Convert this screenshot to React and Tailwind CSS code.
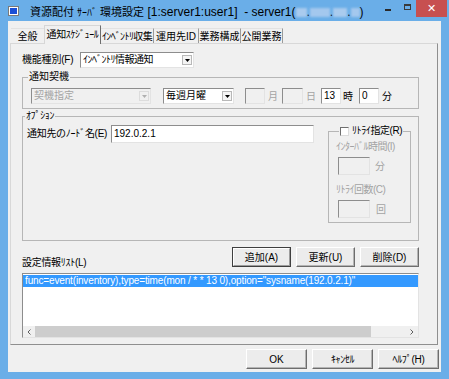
import React from 'react'

const sunken = 'border border-t-[#8d8d8d] border-l-[#8d8d8d] border-r-[#e3e3e3] border-b-[#e3e3e3]'

const Arrow = ({ color = '#000' }) => (
  <svg width="5" height="3" viewBox="0 0 5 3"><path d="M0 0h5L2.5 3z" fill={color} /></svg>
)

function Combo({ className, text, disabled }) {
  return (
    <div className={`flex items-center h-[16px] ${sunken} ${disabled ? 'bg-[#f0f0f0] text-[#a3a3a3]' : 'bg-white text-black'} ${className}`}>
      <span className="flex-1 pl-[2px] leading-[12px] whitespace-nowrap overflow-hidden">{text}</span>
      <span className={`w-[10px] h-[10px] mr-[1px] flex items-center justify-center border ${disabled ? 'border-[#dcdcdc]' : 'border-[#b8b8b8] bg-[#f4f4f4]'}`}>
        <Arrow color={disabled ? '#b0b0b0' : '#000'} />
      </span>
    </div>
  )
}

function Input({ className, value, disabled }) {
  return (
    <div className={`${sunken} ${disabled ? 'bg-[#f0f0f0]' : 'bg-white'} pl-[2px] leading-[13px] ${className}`}>
      {value}
    </div>
  )
}

function Btn({ className, children, def }) {
  if (def) {
    return (
      <div className={`border border-[#3f3f3f] ${className}`}>
        <div className="h-full flex items-center justify-center bg-[#ececec] border border-t-white border-l-white border-r-[#9c9c9c] border-b-[#9c9c9c]">
          {children}
        </div>
      </div>
    )
  }
  return (
    <div className={`flex items-center justify-center bg-[#ececec] border border-t-white border-l-white border-r-[#6d6d6d] border-b-[#6d6d6d] shadow-[inset_-1px_-1px_0_#b4b4b4] ${className}`}>
      {children}
    </div>
  )
}

const Chevron = ({ dir }) => (
  <svg width="4" height="6" viewBox="0 0 4 6">
    <path d={dir === 'l' ? 'M3.5 0.5L1 3l2.5 2.5' : 'M0.5 0.5L3 3 0.5 5.5'} fill="none" stroke="#606060" strokeWidth="1" />
  </svg>
)

export default function App() {
  return (
    <div className="w-[449px] h-[379px] bg-[#6aaee8] flex flex-col px-[8px] pb-[7px] font-['Liberation_Sans','Noto_Sans_CJK_JP',sans-serif] text-black">
      {/* title bar */}
      <div className="h-[21px] flex items-start shrink-0">
        <div className="mt-[6px] w-[11px] h-[10px] bg-white border border-[#7a7a7a] flex p-[1px]">
          <div className="flex-1 bg-[#1a4fd6]" />
        </div>
        <div className="ml-[11px] mt-[5px] text-[12px] leading-[15px] whitespace-nowrap flex items-center">
          <span className="text-[11px]">資源配付 <span className="text-[10px]">ｻｰﾊﾞ</span> 環境設定</span>
          <span>&nbsp;[1:server1:user1]&nbsp;&nbsp;- server1(</span>
          <span className="inline-block w-[11px] h-[9px] bg-[#a9cbee] blur-[1px]" />
          <span>.</span>
          <span className="inline-block w-[20px] h-[9px] bg-[#a4c8ee] blur-[1px]" />
          <span>.</span>
          <span className="inline-block w-[14px] h-[9px] bg-[#a9cbee] blur-[1px]" />
          <span>.</span>
          <span className="inline-block w-[9px] h-[9px] bg-[#a4c8ee] blur-[1px]" />
          <span>)</span>
        </div>
        <div className="ml-auto -mr-[6px] flex items-start">
          <div className="w-[6px] h-[2px] bg-[#2a2a2a] mt-[9px]" />
          <div className="ml-[13px] mt-[4px] w-[7px] h-[6px] border border-[#3a3a3a] border-t-2" />
          <div className="ml-[5px] w-[31px] h-[17px] bg-[#c75050] flex items-center justify-center text-white text-[11px] leading-[11px]">✕</div>
        </div>
      </div>

      {/* client */}
      <div className="flex-1 bg-[#f0f0f0] flex flex-col pl-[2px] pr-[2px] text-[10px]">
        {/* tabs */}
        <div className="h-[22px] flex items-end pl-[1px] shrink-0">
          <div className="w-[33px] h-[15px] flex items-center justify-center border-t border-t-[#e2e2e2]">全般</div>
          <div className="relative z-10 -mb-[1px] w-[57px] h-[19px] pb-[2px] flex items-center justify-center bg-[#f0f0f0] border-t border-l border-r border-t-[#d6d6d6] border-l-[#d6d6d6] border-r-[#6d6d6d] tracking-[-0.4px] whitespace-nowrap">通知ｽｹｼﾞｭｰﾙ</div>
          <div className="w-[53px] h-[15px] flex items-center justify-center border-t border-r border-t-[#e2e2e2] border-r-[#9a9a9a] tracking-[-0.6px] whitespace-nowrap">ｲﾝﾍﾞﾝﾄﾘ収集</div>
          <div className="w-[45px] h-[15px] flex items-center justify-center border-t border-r border-t-[#e2e2e2] border-r-[#9a9a9a] whitespace-nowrap">運用先ID</div>
          <div className="w-[42px] h-[15px] flex items-center justify-center border-t border-r border-t-[#e2e2e2] border-r-[#9a9a9a] whitespace-nowrap">業務構成</div>
          <div className="w-[42px] h-[15px] flex items-center justify-center border-t border-r border-t-[#e2e2e2] border-r-[#9a9a9a] whitespace-nowrap">公開業務</div>
        </div>

        {/* tab panel */}
        <div className="w-[428px] h-[302px] shrink-0 border border-t-[#d8d8d8] border-l-[#d8d8d8] border-r-[#8f8f8f] border-b-[#8f8f8f] pl-[11px] pt-[8px] flex flex-col">
          <div className="flex items-center h-[16px]">
            <span className="w-[58px] leading-[12px] tracking-[-0.2px]">機能種別(F)</span>
            <Combo className="w-[114px]" text={<span className="tracking-[-0.5px]">ｲﾝﾍﾞﾝﾄﾘ情報通知</span>} />
          </div>

          <fieldset className="mt-[3px] w-[397px] border border-[#b6b6b6] pb-[4px]">
            <legend className="ml-[5px] px-[1px] leading-[12px]">通知契機</legend>
            <div className="pt-[5px] pl-[8px] flex items-center">
              <Combo className="w-[120px]" text="契機指定" disabled />
              <Combo className="w-[71px] ml-[12px]" text="毎週月曜" />
              <Input className="ml-[11px] w-[20px] h-[16px]" disabled />
              <span className="w-[17px] pl-[3px] text-[#a3a3a3]">月</span>
              <Input className="w-[21px] h-[16px]" disabled />
              <span className="w-[18px] pl-[3px] text-[#a3a3a3]">日</span>
              <Input className="w-[20px] h-[16px]" value="13" />
              <span className="w-[18px] pl-[2px]">時</span>
              <Input className="w-[20px] h-[16px]" value="0" />
              <span className="pl-[3px]">分</span>
            </div>
          </fieldset>

          <fieldset className="mt-[1px] w-[397px] border border-[#b6b6b6] pb-[17px]">
            <legend className="ml-[2px] px-[1px] leading-[12px] tracking-[-0.4px]">ｵﾌﾟｼｮﾝ</legend>
            <div className="pt-[3px] flex items-start">
              <div className="flex items-center pl-[4px]">
                <span className="w-[84px] leading-[12px] tracking-[-0.3px] whitespace-nowrap">通知先のﾉｰﾄﾞ名(E)</span>
                <Input className="w-[203px] h-[18px] leading-[15px]" value="192.0.2.1" />
              </div>
              <fieldset className="ml-[14px] w-[83px] border border-[#b6b6b6] pb-[4px] pl-[7px]">
                <legend className="ml-[3px] px-[1px] leading-[12px] flex items-center">
                  <span className="w-[9px] h-[9px] bg-white border border-t-[#6f6f6f] border-l-[#6f6f6f] border-r-[#dcdcdc] border-b-[#dcdcdc]" />
                  <span className="ml-[3px] tracking-[-0.4px] whitespace-nowrap">ﾘﾄﾗｲ指定(R)</span>
                </legend>
                <div className="pt-[4px] leading-[12px] text-[#a3a3a3] tracking-[-0.5px] whitespace-nowrap">ｲﾝﾀｰﾊﾞﾙ時間(I)</div>
                <div className="mt-[4px] pl-[2px] flex items-center">
                  <Input className="w-[32px] h-[18px]" disabled />
                  <span className="ml-[5px] text-[#a3a3a3]">分</span>
                </div>
                <div className="mt-[9px] leading-[12px] text-[#a3a3a3] tracking-[-0.5px] whitespace-nowrap">ﾘﾄﾗｲ回数(C)</div>
                <div className="mt-[4px] pl-[2px] flex items-center">
                  <Input className="w-[32px] h-[18px]" disabled />
                  <span className="ml-[6px] text-[#a3a3a3]">回</span>
                </div>
              </fieldset>
            </div>
          </fieldset>

          <div className="mt-[6px] w-[397px] flex items-end">
            <span className="leading-[12px] -mb-[2px] tracking-[-0.3px]">設定情報ﾘｽﾄ(L)</span>
            <div className="ml-auto flex gap-[5px]">
              <Btn className="w-[59px] h-[20px]" def>追加(A)</Btn>
              <Btn className="w-[59px] h-[20px]">更新(U)</Btn>
              <Btn className="w-[59px] h-[20px]">削除(D)</Btn>
            </div>
          </div>

          <div className={`mt-[6px] w-[397px] h-[65px] bg-white ${sunken} flex flex-col`}>
            <div className="mt-[1px] h-[12px] bg-[#3399ff] text-white pl-[2px] leading-[12px] whitespace-nowrap tracking-[-0.15px]">
              func=event(inventory),type=time(mon / * * 13 0),option="sysname(192.0.2.1)"
            </div>
            <div className="mt-auto h-[11px] flex bg-[#f0f0f0]">
              <div className="w-[12px] flex items-center justify-center"><Chevron dir="l" /></div>
              <div className="w-[336px] bg-[#cdcdcd]" />
              <div className="flex-1" />
              <div className="w-[12px] flex items-center justify-center"><Chevron dir="r" /></div>
            </div>
          </div>
        </div>

        {/* dialog buttons */}
        <div className="mt-[4px] flex justify-end gap-[5px]">
          <Btn className="w-[61px] h-[20px]">OK</Btn>
          <Btn className="w-[61px] h-[20px]"><span className="tracking-[-0.4px]">ｷｬﾝｾﾙ</span></Btn>
          <Btn className="w-[61px] h-[20px]"><span className="tracking-[-0.3px]">ﾍﾙﾌﾟ(H)</span></Btn>
        </div>
      </div>
    </div>
  )
}
